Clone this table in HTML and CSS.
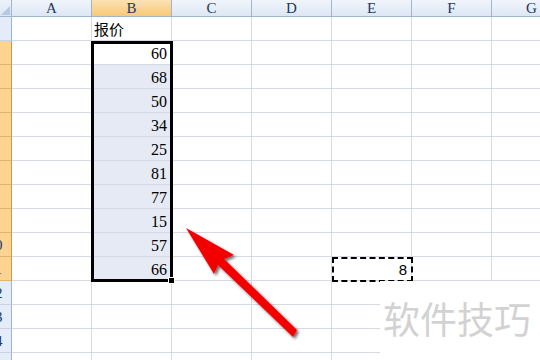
FILE: index.html
```html
<!DOCTYPE html>
<html>
<head>
<meta charset="utf-8">
<link rel="stylesheet" href="styles.css">
</head>
<body>
<div class="sheet">
  <div class="grid">
    <div class="corner"><span class="tri"></span></div>
    <div class="ch">A</div><div class="ch sel">B</div><div class="ch">C</div><div class="ch">D</div><div class="ch">E</div><div class="ch">F</div><div class="ch">G</div>

    <div class="rh"><span>1</span></div><div class="c"></div><div class="c txt">报价</div><div class="c"></div><div class="c"></div><div class="c"></div><div class="c"></div><div class="c"></div>
    <div class="rh on"><span>2</span></div><div class="c"></div><div class="c num">60</div><div class="c"></div><div class="c"></div><div class="c"></div><div class="c"></div><div class="c"></div>
    <div class="rh on"><span>3</span></div><div class="c"></div><div class="c num hl">68</div><div class="c"></div><div class="c"></div><div class="c"></div><div class="c"></div><div class="c"></div>
    <div class="rh on"><span>4</span></div><div class="c"></div><div class="c num hl">50</div><div class="c"></div><div class="c"></div><div class="c"></div><div class="c"></div><div class="c"></div>
    <div class="rh on"><span>5</span></div><div class="c"></div><div class="c num hl">34</div><div class="c"></div><div class="c"></div><div class="c"></div><div class="c"></div><div class="c"></div>
    <div class="rh on"><span>6</span></div><div class="c"></div><div class="c num hl">25</div><div class="c"></div><div class="c"></div><div class="c"></div><div class="c"></div><div class="c"></div>
    <div class="rh on"><span>7</span></div><div class="c"></div><div class="c num hl">81</div><div class="c"></div><div class="c"></div><div class="c"></div><div class="c"></div><div class="c"></div>
    <div class="rh on"><span>8</span></div><div class="c"></div><div class="c num hl">77</div><div class="c"></div><div class="c"></div><div class="c"></div><div class="c"></div><div class="c"></div>
    <div class="rh on"><span>9</span></div><div class="c"></div><div class="c num hl">15</div><div class="c"></div><div class="c"></div><div class="c"></div><div class="c"></div><div class="c"></div>
    <div class="rh on"><span>10</span></div><div class="c"></div><div class="c num hl">57</div><div class="c"></div><div class="c"></div><div class="c"></div><div class="c"></div><div class="c"></div>
    <div class="rh on"><span>11</span></div><div class="c"></div><div class="c num hl">66</div><div class="c"></div><div class="c"></div><div class="c sans">8</div><div class="c"></div><div class="c"></div>
    <div class="rh"><span>12</span></div><div class="c"></div><div class="c"></div><div class="c"></div><div class="c"></div><div class="c"></div><div class="c"></div><div class="c"></div>
    <div class="rh"><span>13</span></div><div class="c"></div><div class="c"></div><div class="c"></div><div class="c"></div><div class="c"></div><div class="c"></div><div class="c"></div>
    <div class="rh"><span>14</span></div><div class="c"></div><div class="c"></div><div class="c"></div><div class="c"></div><div class="c"></div><div class="c"></div><div class="c"></div>
    <div class="rh"><span>15</span></div><div class="c"></div><div class="c"></div><div class="c"></div><div class="c"></div><div class="c"></div><div class="c"></div><div class="c"></div>
  </div>

  <div class="selbox"><span class="handle"></span></div>
  <div class="marquee"></div>

  <svg class="arrow" width="540" height="360" viewBox="0 0 540 360">
    <defs>
      <filter id="sh" x="-20%" y="-20%" width="140%" height="140%">
        <feGaussianBlur in="SourceAlpha" stdDeviation="1.6"/>
        <feOffset dx="2" dy="2" result="b"/>
        <feComponentTransfer><feFuncA type="linear" slope="0.6"/></feComponentTransfer>
        <feMerge><feMergeNode/><feMergeNode in="SourceGraphic"/></feMerge>
      </filter>
    </defs>
    <polygon filter="url(#sh)" fill="#f20000" points="186,228 234,255 224,259 297,330 293,337 218,265 214,274"/>
  </svg>

  <div class="watermark">软件技巧</div>
</div>
</body>
</html>
```

FILE: styles.css
```css
html, body {
  margin: 0;
  padding: 0;
  background: #fff;
}
body {
  width: 540px;
  height: 360px;
  overflow: hidden;
}
.sheet {
  position: relative;
  width: 540px;
  height: 360px;
  overflow: hidden;
}
.grid {
  display: grid;
  grid-template-columns: 12px repeat(7, 80px);
  grid-template-rows: 17px repeat(15, 24px);
  width: 572px;
}
.corner {
  position: relative;
  background: linear-gradient(#eef3fa, #dbe5f3);
  border-right: 1px solid #9eb6ce;
  border-bottom: 1px solid #9eb6ce;
  box-sizing: border-box;
}
.tri {
  position: absolute;
  right: 1px;
  bottom: 1px;
  width: 0;
  height: 0;
  border-left: 9px solid transparent;
  border-bottom: 9px solid #b7c9e0;
}
.ch {
  box-sizing: border-box;
  background: linear-gradient(#f1f5fb, #dde7f4);
  border-right: 1px solid #9eb6ce;
  border-bottom: 1px solid #9eb6ce;
  font-family: "Liberation Serif", serif;
  font-size: 15px;
  color: #1e395b;
  text-align: center;
  line-height: 17px;
}
.ch.sel {
  background: linear-gradient(#fbe2b3, #f6c977);
}
.rh {
  box-sizing: border-box;
  background: #e4ecf7;
  border-right: 1px solid #9eb6ce;
  border-bottom: 1px solid #c5d3e3;
  overflow: hidden;
  display: flex;
  justify-content: flex-end;
  font-family: "Liberation Serif", serif;
  font-size: 15px;
  color: #1e395b;
  line-height: 25px;
}
.rh span {
  flex: none;
  width: 32px;
  text-align: center;
}
.rh.on {
  background: #fcd391;
  border-bottom-color: #e2b26a;
  border-right-color: #c99a4f;
}
.c {
  box-sizing: border-box;
  border-right: 1px solid #d4d9e2;
  border-bottom: 1px solid #d4d9e2;
  line-height: 25px;
  color: #000;
  white-space: nowrap;
}
.c.hl {
  background: #e6eaf4;
}
.num {
  font-family: "Liberation Serif", serif;
  font-size: 16px;
  text-align: right;
  padding-right: 4px;
}
.txt {
  font-family: "Noto Sans CJK SC", sans-serif;
  font-size: 15px;
  padding-left: 2px;
  line-height: 24px;
}
.sans {
  font-family: "Liberation Sans", sans-serif;
  font-size: 15px;
  text-align: right;
  padding-right: 4px;
}
.selbox {
  position: absolute;
  left: 91px;
  top: 41px;
  width: 82px;
  height: 241px;
  box-sizing: border-box;
  border: 3px solid #000;
}
.handle {
  position: absolute;
  right: -5px;
  bottom: -5px;
  width: 5px;
  height: 5px;
  background: #000;
  border: 1px solid #fff;
}
.marquee {
  position: absolute;
  left: 332px;
  top: 257px;
  width: 81px;
  height: 25px;
  box-sizing: border-box;
  border: 2px dashed #000;
}
.arrow {
  position: absolute;
  left: 0;
  top: 0;
}
.watermark {
  position: absolute;
  left: 380px;
  top: 281px;
  width: 160px;
  height: 79px;
  background: #fff;
  font-family: "Noto Sans CJK SC", sans-serif;
  font-size: 37px;
  color: #d2d2d2;
  line-height: 74px;
  padding-left: 3px;
  box-sizing: border-box;
  letter-spacing: 0;
}
```
